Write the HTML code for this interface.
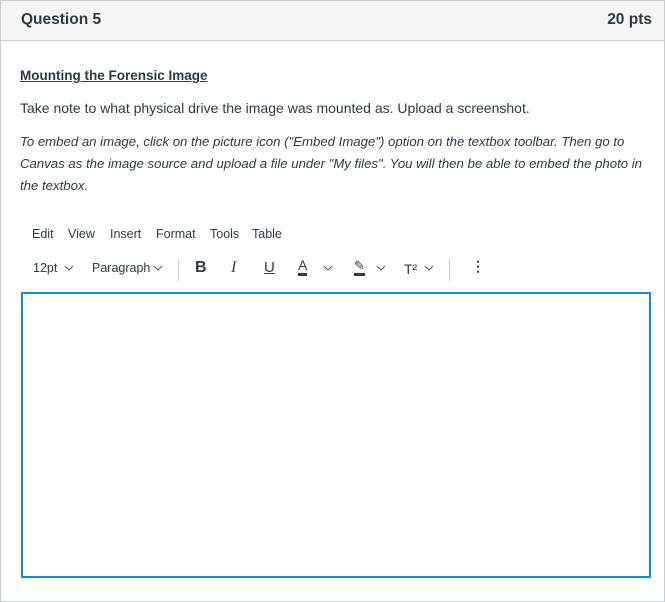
<!DOCTYPE html>
<html><head><style>
body{margin:0;width:665px;height:584px;overflow:hidden;background:#fff;font-family:"Liberation Sans",sans-serif;color:#2d3b45}
.wrap{position:absolute;left:0;top:0;width:663px;height:600px;border:1px solid #c7cdd1}
.hdr{height:39px;background:#f5f5f5;border-bottom:1px solid #c7cdd1;position:relative}
.hdr .q{position:absolute;left:20px;top:10px;font-size:15.5px;font-weight:bold}
.hdr .p{position:absolute;right:12px;top:10px;font-size:15.5px;font-weight:bold}
.t{position:absolute;left:20px;font-size:14px;white-space:nowrap}
.i{font-style:italic;font-size:13.2px;line-height:22px}
.m{position:absolute;top:227px;font-size:12.5px}
.tb{position:absolute;top:261px;font-size:12.5px}
.box{position:absolute;left:21px;top:292px;width:626px;height:282px;border:2px solid #0b8fe3}
.sep{position:absolute;top:259px;width:1px;height:22px;background:#c7cdd1}
.cv{position:absolute;top:265px}
</style></head><body>
<div class="wrap"><div class="hdr"><span class="q">Question 5</span><span class="p">20 pts</span></div></div>
<div class="t" style="top:68px;text-decoration:underline;font-weight:bold;font-size:13.5px">Mounting the Forensic Image</div>
<div class="t" style="top:100px">Take note to what physical drive the image was mounted as. Upload a screenshot.</div>
<div class="t i" style="top:131px">To embed an image, click on the picture icon ("Embed Image") option on the textbox toolbar. Then go to<br>Canvas as the image source and upload a file under "My files". You will then be able to embed the photo in<br>the textbox.</div>
<span class="m" style="left:32px">Edit</span><span class="m" style="left:68px">View</span><span class="m" style="left:110px">Insert</span><span class="m" style="left:156px">Format</span><span class="m" style="left:210px">Tools</span><span class="m" style="left:252px">Table</span>
<span class="tb" style="left:33px">12pt</span>
<svg class="cv" style="left:64px" width="10" height="6"><path d="M1 1l4 4 4-4" fill="none" stroke="#555" stroke-width="1"/></svg>
<span class="tb" style="left:92px">Paragraph</span>
<svg class="cv" style="left:153px" width="10" height="6"><path d="M1 1l4 4 4-4" fill="none" stroke="#555" stroke-width="1"/></svg>
<div class="sep" style="left:178px"></div>
<span class="tb" style="left:195px;font-weight:bold;font-size:16px;top:259px">B</span>
<span class="tb" style="left:231px;font-style:italic;font-size:16px;top:259px;font-family:'Liberation Serif'">I</span>
<span class="tb" style="left:264px;text-decoration:underline;font-size:15px;top:259px">U</span>
<span class="tb" style="left:298px;font-size:14px;top:258px;border-bottom:3px solid #2d3b45;line-height:15px">A</span>
<svg class="cv" style="left:323px" width="10" height="6"><path d="M1 1l4 4 4-4" fill="none" stroke="#555" stroke-width="1"/></svg>
<span class="tb" style="left:354px;font-size:13px;top:258px;border-bottom:3px solid #2d3b45;line-height:15px">&#9998;</span>
<svg class="cv" style="left:376px" width="10" height="6"><path d="M1 1l4 4 4-4" fill="none" stroke="#555" stroke-width="1"/></svg>
<span class="tb" style="left:404px;font-size:14px">T²</span>
<svg class="cv" style="left:424px" width="10" height="6"><path d="M1 1l4 4 4-4" fill="none" stroke="#555" stroke-width="1"/></svg>
<div class="sep" style="left:449px"></div>
<span class="tb" style="left:471px;font-weight:bold;font-size:14px;top:258px">&#8942;</span>
<div class="box"></div>
</body></html>
